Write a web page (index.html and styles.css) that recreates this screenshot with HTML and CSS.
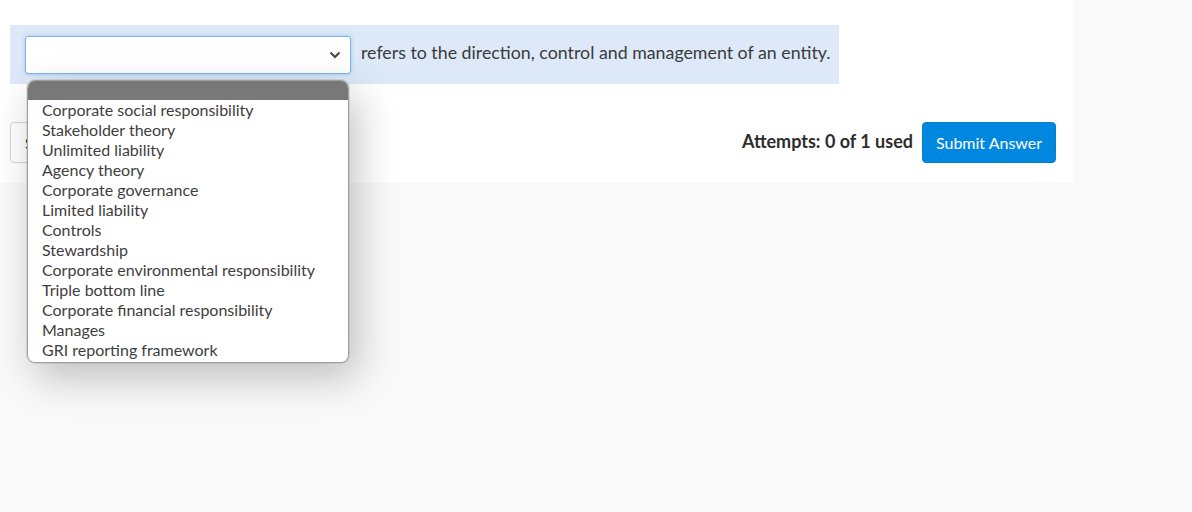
FILE: index.html
```html
<!DOCTYPE html>
<html lang="en">
<head>
    <meta charset="UTF-8">
    <meta name="viewport" content="width=device-width, initial-scale=1.0">
    <title>Question</title>
    <link rel="stylesheet" href="styles.css">
</head>
<body>
    <div class="question">
        <!-- Fill in the blank -->
        <div class="prompt">
            <div class="select-wrap">
                <div class="select">
                    <svg class="chevron" width="12" height="8" viewBox="0 0 12 8">
                        <path d="M1.5 1.5 L6 6 L10.5 1.5" fill="none" stroke="#444" stroke-width="2"/>
                    </svg>
                </div>
                <ul class="options">
                    <li class="selected">&nbsp;</li>
                    <li>Corporate social responsibility</li>
                    <li>Stakeholder theory</li>
                    <li>Unlimited liability</li>
                    <li>Agency theory</li>
                    <li>Corporate governance</li>
                    <li>Limited liability</li>
                    <li>Controls</li>
                    <li>Stewardship</li>
                    <li>Corporate environmental responsibility</li>
                    <li>Triple bottom line</li>
                    <li>Corporate financial responsibility</li>
                    <li>Manages</li>
                    <li>GRI reporting framework</li>
                </ul>
            </div>
            <span class="prompt-text">refers to the direction, control and management of an entity.</span>
        </div>

        <!-- Actions -->
        <div class="actions">
            <button class="btn-secondary">Save</button>
            <div class="submit-area">
                <span class="attempts">Attempts: 0 of 1 used</span>
                <button class="btn-submit">Submit Answer</button>
            </div>
        </div>
    </div>
</body>
</html>
```

FILE: styles.css
```css
/* General styles */
html {
    min-height: 100%;
    background: #f9f9f9;
}

body {
    font-family: 'Lato', 'Open Sans', sans-serif;
    background: #f9f9f9;
    color: #333;
    margin: 0;
    padding: 0;
    min-height: 100vh;
}

.question {
    width: 1073px;
    box-sizing: border-box;
    background: white;
    padding: 25px 17px 20px 10px;
}

/* Prompt with blank */
.prompt {
    display: inline-flex;
    align-items: flex-start;
    gap: 10px;
    background: #dde9f8;
    padding: 11px 8px 10px 15px;
}

.select-wrap {
    position: relative;
}

.select {
    width: 326px;
    height: 38px;
    box-sizing: border-box;
    background: white;
    border: 1px solid #7fb3ea;
    border-radius: 3px;
    box-shadow: 0 0 4px rgba(90, 160, 235, 0.5);
    display: flex;
    align-items: center;
    justify-content: flex-end;
    padding-right: 9px;
}

.prompt-text {
    font-size: 17.8px;
    line-height: 22px;
    margin-top: 5px;
    color: #3a3a3a;
}

/* Open dropdown list */
.options {
    position: absolute;
    top: 44px;
    left: 2px;
    width: 322px;
    box-sizing: border-box;
    margin: 0;
    padding: 0 0 2px 0;
    list-style: none;
    background: white;
    border: 1px solid #a0a0a0;
    border-radius: 8px;
    overflow: hidden;
    box-shadow: 0 0 0 1px rgba(0, 0, 0, 0.08), 8px 14px 40px rgba(0, 0, 0, 0.24);
    z-index: 10;
}

.options li {
    font-size: 16px;
    line-height: 20px;
    height: 20px;
    padding-left: 14px;
    color: #3e3e3e;
    white-space: nowrap;
}

.options li.selected {
    background: #787878;
    height: 19px;
}

/* Actions row */
.actions {
    display: flex;
    justify-content: space-between;
    align-items: flex-start;
    margin-top: 38px;
}

.btn-secondary {
    font-family: inherit;
    font-size: 15px;
    height: 41px;
    padding: 0 14px;
    background: white;
    color: #333;
    border: 1px solid #d4d4d4;
    border-radius: 4px;
}

.submit-area {
    display: flex;
    align-items: flex-start;
    gap: 9px;
}

.attempts {
    font-size: 18px;
    font-weight: bold;
    color: #2d2d2d;
    margin-top: 8px;
}

.btn-submit {
    font-family: inherit;
    font-size: 16px;
    width: 134px;
    height: 41px;
    background: #0088e0;
    color: white;
    border: 1px solid #0a7fcc;
    border-radius: 4px;
    cursor: pointer;
}
```
